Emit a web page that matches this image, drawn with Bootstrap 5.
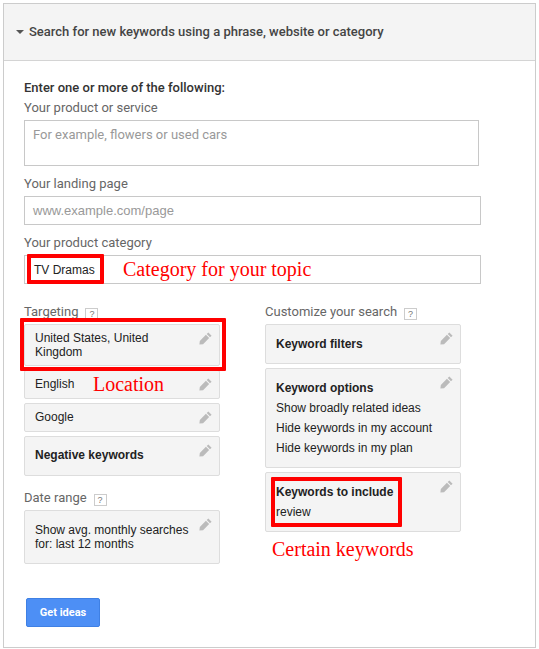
<!DOCTYPE html>
<html lang="en">
<head>
<meta charset="utf-8">
<title>Keyword Planner</title>
<link href="https://cdn.jsdelivr.net/npm/bootstrap@5.3.0/dist/css/bootstrap.min.css" rel="stylesheet">
<style>
html, body { background: #fff; height: 649px; overflow: hidden; }
body { padding: 3px 3px 0 3px; font-family: "Liberation Sans", Arial, sans-serif; color: #222; }
.kp-panel { width: 533px; height: 645px; border: 1px solid #ccc; }
.kp-head { height: 57px; background: #f4f4f4; border-bottom: 1px solid #d4d4d4; padding-left: 12px; gap: 5px; font: 500 13px Roboto, sans-serif; color: #444; padding-bottom: 1px; }
.kp-caret { width: 0; height: 0; border-left: 4px solid transparent; border-right: 4px solid transparent; border-top: 4px solid #555; }
.kp-main { padding: 17px 20px 0 20px; }
.kp-lead { font: 500 13px/19px Roboto, sans-serif; color: #333; }
.kp-label { font: 400 13px/20px Roboto, sans-serif; color: #666; padding-top: 1px; margin-bottom: -1px; }
.kp-area { width: 455px; height: 46px; border: 1px solid #c8c8c8; padding: 5px 8px; font: 400 13px/18px Roboto, sans-serif; color: #999; margin-top: 3px; }
.kp-field { width: 457px; height: 29px; border: 1px solid #c8c8c8; padding-left: 8px; font: 13px "Liberation Sans", Arial, sans-serif; color: #999; margin-top: 3px; }
.kp-area + .kp-label { margin-top: 7px; }
.kp-field + .kp-label { margin-top: 7px; }
.kp-over { position: relative; }
.kp-ring { position: absolute; border: 4px solid #f00; border-radius: 1px; }
.kp-note { position: absolute; color: #f00; font: 20px/24px "Liberation Serif", "Times New Roman", serif; white-space: nowrap; }
.kp-cat { color: #222; font-size: 12px; padding-left: 9px; }
.kp-cols { margin-top: 17px; width: 437px; gap: 45px; }
.kp-col { width: 196px; }
.kp-help { display: inline-flex; width: 13px; height: 12px; border: 1px solid #ccc; align-items: center; justify-content: center; font: 9px "Liberation Sans", Arial, sans-serif; color: #777; margin-left: 7px; vertical-align: -1px; }
.kp-heading { height: 20px; margin-bottom: 3px; }
.kp-tile { position: relative; background: #f4f4f4; border: 1px solid #ddd; border-radius: 2px; padding: 0 24px 0 10px; font-size: 12px; line-height: 14px; color: #222; margin-bottom: 4px; }
.kp-tile b { font-weight: 700; }
.kp-tile svg { position: absolute; right: 7px; top: 7px; width: 13px; height: 13px; }
.kp-t1 { height: 42px; padding-top: 6px; }
.kp-t2 { height: 29px; padding-top: 6px; }
.kp-t3 { height: 40px; padding-top: 11px; }
.kp-t4 { height: 54px; padding-top: 12px; }
.kp-t5 { height: 100px; padding-top: 9px; line-height: 20px; }
.kp-t6 { height: 60px; padding-top: 9px; line-height: 20px; }
.kp-col-r .kp-t3 { padding-top: 12px; }
.kp-gap { margin-top: 11px; }
.kp-go { width: 74px; height: 29px; background: #4d8ff5; border: 1px solid #3f80e4; border-radius: 2px; color: #fff; font: 700 11px Roboto, sans-serif; padding: 0; margin: 30px 0 0 2px; display: block; }
</style>
</head>
<body>
<div class="kp-panel">
  <div class="kp-head d-flex align-items-center"><span class="kp-caret"></span><span>Search for new keywords using a phrase, website or category</span></div>
  <div class="kp-main">
    <div class="kp-lead">Enter one or more of the following:</div>
    <div class="kp-label">Your product or service</div>
    <div class="kp-area">For example, flowers or used cars</div>
    <div class="kp-label">Your landing page</div>
    <div class="kp-field d-flex align-items-center">www.example.com/page</div>
    <div class="kp-label">Your product category</div>
    <div class="kp-over">
      <div class="kp-field kp-cat d-flex align-items-center">TV Dramas</div>
      <span class="kp-ring" style="left:3px;top:-1px;width:77px;height:30px"></span>
      <span class="kp-note" style="left:99px;top:2px">Category for your topic</span>
    </div>
    <div class="kp-cols d-flex">
      <div class="kp-col">
        <div class="kp-label kp-heading">Targeting<span class="kp-help">?</span></div>
        <div class="kp-over">
          <div class="kp-tile kp-t1">United States, United Kingdom<svg viewBox="0 0 16 16"><path fill="#bbb" d="M11.500 .5 15.500 4.500 13.500 6.500 9.500 2.500ZM8.500 3.500 12.500 7.500 5 15 .5 15.500 1 11Z"/></svg></div>
          <div class="kp-tile kp-t2">English<svg viewBox="0 0 16 16"><path fill="#bbb" d="M11.500 .5 15.500 4.500 13.500 6.500 9.500 2.500ZM8.500 3.500 12.500 7.500 5 15 .5 15.500 1 11Z"/></svg></div>
          <div class="kp-tile kp-t2">Google<svg viewBox="0 0 16 16"><path fill="#bbb" d="M11.500 .5 15.500 4.500 13.500 6.500 9.500 2.500ZM8.500 3.500 12.500 7.500 5 15 .5 15.500 1 11Z"/></svg></div>
          <div class="kp-tile kp-t3"><b>Negative keywords</b><svg viewBox="0 0 16 16"><path fill="#bbb" d="M11.500 .5 15.500 4.500 13.500 6.500 9.500 2.500ZM8.500 3.500 12.500 7.500 5 15 .5 15.500 1 11Z"/></svg></div>
          <span class="kp-ring" style="left:-4px;top:-6px;width:206px;height:53px"></span>
          <span class="kp-note" style="left:69px;top:48px">Location</span>
        </div>
        <div class="kp-label kp-heading kp-gap">Date range<span class="kp-help">?</span></div>
        <div class="kp-tile kp-t4">Show avg. monthly searches for: last 12 months<svg viewBox="0 0 16 16"><path fill="#bbb" d="M11.500 .5 15.500 4.500 13.500 6.500 9.500 2.500ZM8.500 3.500 12.500 7.500 5 15 .5 15.500 1 11Z"/></svg></div>
      </div>
      <div class="kp-col kp-col-r">
        <div class="kp-label kp-heading">Customize your search<span class="kp-help">?</span></div>
        <div class="kp-tile kp-t3"><b>Keyword filters</b><svg viewBox="0 0 16 16"><path fill="#bbb" d="M11.500 .5 15.500 4.500 13.500 6.500 9.500 2.500ZM8.500 3.500 12.500 7.500 5 15 .5 15.500 1 11Z"/></svg></div>
        <div class="kp-tile kp-t5"><b>Keyword options</b><br>Show broadly related ideas<br>Hide keywords in my account<br>Hide keywords in my plan<svg viewBox="0 0 16 16"><path fill="#bbb" d="M11.500 .5 15.500 4.500 13.500 6.500 9.500 2.500ZM8.500 3.500 12.500 7.500 5 15 .5 15.500 1 11Z"/></svg></div>
        <div class="kp-over">
          <div class="kp-tile kp-t6"><b>Keywords to include</b><br>review<svg viewBox="0 0 16 16"><path fill="#bbb" d="M11.500 .5 15.500 4.500 13.500 6.500 9.500 2.500ZM8.500 3.500 12.500 7.500 5 15 .5 15.500 1 11Z"/></svg></div>
          <span class="kp-ring" style="left:6px;top:5px;width:131px;height:50px"></span>
          <span class="kp-note" style="left:7px;top:65px">Certain keywords</span>
        </div>
      </div>
    </div>
    <button type="button" class="btn kp-go">Get ideas</button>
  </div>
</div>
<script src="https://cdn.jsdelivr.net/npm/bootstrap@5.3.0/dist/js/bootstrap.bundle.min.js"></script>
</body>
</html>
